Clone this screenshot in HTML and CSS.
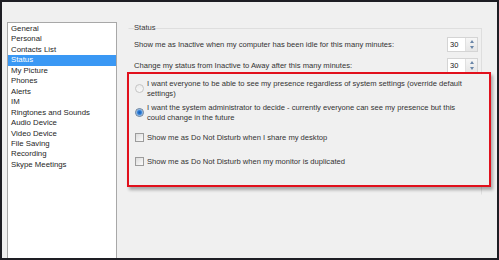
FILE: index.html
```html
<!DOCTYPE html>
<html>
<head>
<meta charset="utf-8">
<link rel="stylesheet" href="styles.css">
</head>
<body>
<div class="window">
  <ul class="nav">
    <li>General</li>
    <li>Personal</li>
    <li>Contacts List</li>
    <li class="selected">Status</li>
    <li>My Picture</li>
    <li>Phones</li>
    <li>Alerts</li>
    <li>IM</li>
    <li>Ringtones and Sounds</li>
    <li>Audio Device</li>
    <li>Video Device</li>
    <li>File Saving</li>
    <li>Recording</li>
    <li>Skype Meetings</li>
  </ul>
  <div class="content">
    <fieldset class="group">
      <legend class="group-title">Status</legend>
      <div class="setting">
        <span>Show me as Inactive when my computer has been idle for this many minutes:</span>
        <span class="spinner"><span class="spin-value">30</span><span class="spin-buttons"><span class="arrow up"></span><span class="arrow down"></span></span></span>
      </div>
      <div class="setting">
        <span>Change my status from Inactive to Away after this many minutes:</span>
        <span class="spinner"><span class="spin-value">30</span><span class="spin-buttons"><span class="arrow up"></span><span class="arrow down"></span></span></span>
      </div>
      <div class="highlight">
        <div class="option opt-first">
          <span class="radio disabled"></span>
          <span class="label">I want everyone to be able to see my presence regardless of system settings (override default settings)</span>
        </div>
        <div class="option opt-second">
          <span class="radio checked"></span>
          <span class="label">I want the system administrator to decide - currently everyone can see my presence but this could change in the future</span>
        </div>
        <div class="option opt-third">
          <span class="checkbox"></span>
          <span class="label">Show me as Do Not Disturb when I share my desktop</span>
        </div>
        <div class="option opt-fourth">
          <span class="checkbox"></span>
          <span class="label">Show me as Do Not Disturb when my monitor is duplicated</span>
        </div>
      </div>
    </fieldset>
  </div>
</div>
</body>
</html>
```

FILE: styles.css
```css
html, body {
  margin: 0;
  padding: 0;
  background: #f0f0f0;
}

.window {
  width: 499px;
  height: 260px;
  box-sizing: border-box;
  border: 2px solid #1e1e24;
  background: #f0f0f0;
  display: flex;
  overflow: hidden;
  font-family: "Liberation Sans", Arial, sans-serif;
}

.nav {
  list-style: none;
  margin: 20px 0 0 5px;
  padding: 1px 0 0 0;
  width: 110px;
  box-sizing: border-box;
  flex: none;
  background: #fff;
  border: 1px solid #a8a8a8;
  border-bottom: none;
  font-size: 7.8px;
  color: #262626;
}

.nav li {
  height: 10.46px;
  line-height: 10.46px;
  padding-left: 3px;
  white-space: nowrap;
}

.nav li.selected {
  background: #3a98f4;
  color: #fff;
}

.content {
  flex: 1;
  padding: 21px 15px 0 11px;
  min-width: 0;
}

.group {
  margin: 0;
  padding: 0 3px 0 5px;
  border: 1px solid #dedede;
  border-left-color: transparent;
  border-bottom-color: transparent;
  height: 172px;
  box-sizing: border-box;
  font-size: 7.6px;
  color: #333;
}

.group-title {
  padding: 0;
  line-height: 10px;
  color: #3a3a3a;
}

.setting {
  display: flex;
  align-items: center;
  justify-content: space-between;
  height: 21px;
  white-space: nowrap;
}

.setting:first-of-type {
  margin-top: 1px;
}

.spinner {
  display: flex;
  width: 31px;
  height: 15px;
  box-sizing: border-box;
  border: 1px solid #d4d4d4;
  background: #fff;
}

.spin-value {
  flex: 1;
  line-height: 13px;
  padding-left: 2px;
  font-size: 7.5px;
  color: #222;
}

.spin-buttons {
  width: 11px;
  display: flex;
  flex-direction: column;
  align-items: center;
  justify-content: space-around;
  background: linear-gradient(#f6f6f6, #e6e6e6);
  border-left: 1px solid #e0e0e0;
}

.arrow {
  width: 0;
  height: 0;
  border-left: 2.5px solid transparent;
  border-right: 2.5px solid transparent;
}

.arrow.up {
  border-bottom: 3px solid #6a86a8;
}

.arrow.down {
  border-top: 3px solid #6a86a8;
}

.highlight {
  position: relative;
  z-index: 1;
  margin: -4.5px -13px 0 -7px;
  height: 115px;
  box-sizing: border-box;
  border: 2px solid #e1101c;
  background: #f0f0f0;
  box-shadow: 2px 3px 3px rgba(0, 0, 0, 0.3);
  padding: 5.3px 20px 0 6px;
}

.option {
  display: flex;
  align-items: center;
  line-height: 10px;
}

.opt-second { margin-top: 4px; }
.opt-third { margin-top: 10px; }
.opt-fourth { margin-top: 14px; }

.label {
  margin-left: 3px;
}

.radio {
  flex: none;
  width: 9px;
  height: 9px;
  box-sizing: border-box;
  border-radius: 50%;
  border: 1px solid #9a9a9a;
  background: linear-gradient(#e4e4e4, #fafafa);
}

.radio.disabled {
  border-color: #c4c4c4;
  background: linear-gradient(#ececec, #f8f8f8);
}

.radio.checked {
  border-color: #5f7a9a;
  background: radial-gradient(circle, #1d5fb0 0, #2c7bd6 1.8px, #8ab8e8 3px, #e8eef6 3.6px);
}

.checkbox {
  flex: none;
  width: 9px;
  height: 9px;
  box-sizing: border-box;
  border: 1px solid #9c9c9c;
  background: linear-gradient(135deg, #dcdcdc, #fbfbfb);
}
```
